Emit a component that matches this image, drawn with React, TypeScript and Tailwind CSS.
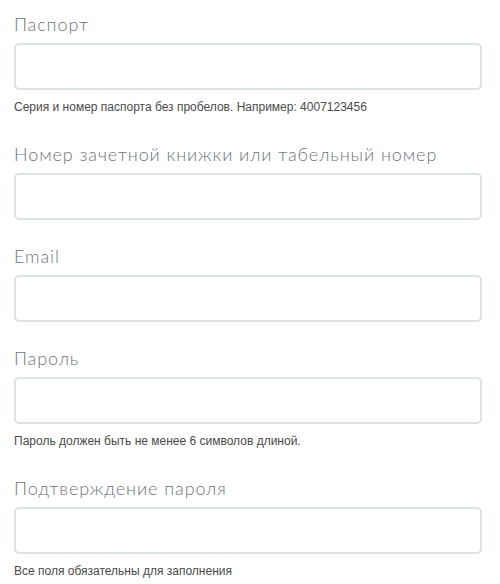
import React from 'react';

interface FieldProps {
  label: string;
  type?: string;
  hint?: string;
}

const Field: React.FC<FieldProps> = ({ label, type = 'text', hint }) => (
  <div className="flex flex-col mb-[24px]">
    <label className="font-['Lato',sans-serif] font-light text-[18px] leading-[24px] text-[#6c757b] tracking-[0.9px] mb-[7px]">
      {label}
    </label>
    <input
      type={type}
      className="h-[47px] w-full rounded-[5px] border-2 border-[#dde2e4] bg-white px-3 outline-none"
    />
    {hint && (
      <p className="mt-[10px] mb-[3px] font-['Liberation_Sans',Arial,sans-serif] text-[12px] leading-[15px] text-[#4a4a4a]">
        {hint}
      </p>
    )}
  </div>
);

export default function App() {
  return (
    <div className="min-h-screen bg-white pl-[14px] pr-[18px] pt-[12px]">
      <form className="flex flex-col">
        <Field label="Паспорт" hint="Серия и номер паспорта без пробелов. Например: 4007123456" />
        <Field label="Номер зачетной книжки или табельный номер" />
        <Field label="Email" type="email" />
        <Field label="Пароль" type="password" hint="Пароль должен быть не менее 6 символов длиной." />
        <Field label="Подтверждение пароля" type="password" hint="Все поля обязательны для заполнения" />
      </form>
    </div>
  );
}
